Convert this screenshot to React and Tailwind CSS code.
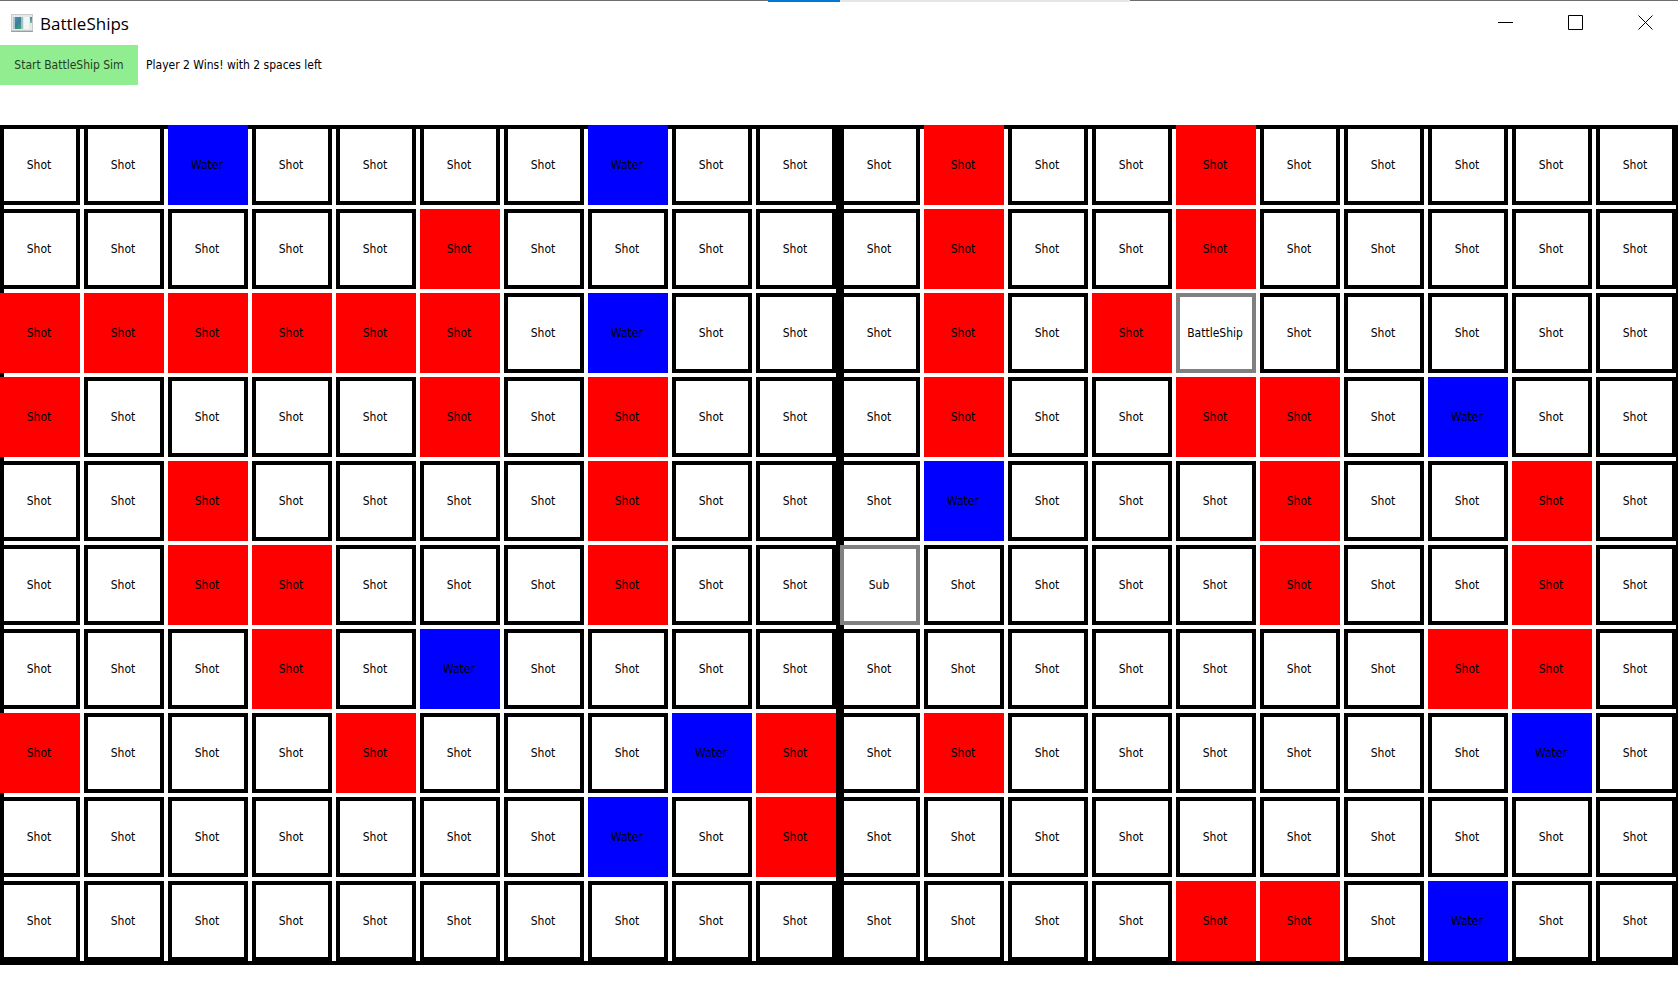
const LEFT = [
  "..W....W..",
  ".....R....",
  "RRRRRR.W..",
  "R....R.R..",
  "..R....R..",
  "..RR...R..",
  "...R.W....",
  "R...R...WR",
  ".......W.R",
  "..........",
];

const RIGHT = [
  ".R..R.....",
  ".R..R.....",
  ".R.RB.....",
  ".R..RR.W..",
  ".W...R..R.",
  "S....R..R.",
  ".......RR.",
  ".R......W.",
  "..........",
  "....RR.W..",
];

const CELLS = {
  ".": { label: "Shot", look: "border-4 border-black bg-white" },
  R: { label: "Shot", look: "bg-[#ff0000]" },
  W: { label: "Water", look: "bg-[#0000ff]" },
  S: { label: "Sub", look: "border-4 border-[#808080] bg-white" },
  B: { label: "BattleShip", look: "border-4 border-[#808080] bg-white" },
};

function Board({ name, rows }) {
  return (
    <section
      aria-label={name}
      className="grid shrink-0 grid-cols-[repeat(10,80px)] gap-1 pr-1 pb-1 shadow-[inset_0_0_0_4px_#000]"
    >
      {rows.flatMap((row, y) =>
        [...row].map((code, x) => (
          <div
            key={`${x}-${y}`}
            className={`flex h-20 w-20 items-center justify-center pr-0.5 ${CELLS[code].look}`}
          >
            {CELLS[code].label}
          </div>
        ))
      )}
    </section>
  );
}

function AppIcon() {
  return (
    <svg width="24" height="20" viewBox="0 0 24 20" aria-hidden="true">
      <defs>
        <linearGradient id="pane" x1="0" y1="0" x2="1" y2="1">
          <stop offset="0" stopColor="#5b8fc0" />
          <stop offset="0.5" stopColor="#3a7f9a" />
          <stop offset="1" stopColor="#4fae62" />
        </linearGradient>
        <linearGradient id="side" x1="0" y1="0" x2="0" y2="1">
          <stop offset="0" stopColor="#3f7fb5" />
          <stop offset="1" stopColor="#7cc08a" />
        </linearGradient>
      </defs>
      <rect x="1" y="0" width="22" height="18" fill="#c9cccd" />
      <rect x="2" y="1" width="20" height="15" fill="#e6e9ea" />
      <rect x="3" y="3" width="10" height="12" fill="url(#pane)" />
      <rect x="3" y="3" width="2" height="12" fill="#a9c6d3" />
      <rect x="11" y="3" width="2" height="12" fill="#9dc0cb" />
      <rect x="14" y="3" width="5" height="12" fill="#f4f5f5" />
      <rect x="20" y="3" width="2" height="6" fill="url(#side)" />
      <rect x="1" y="17" width="22" height="1" fill="#9b9fa0" />
    </svg>
  );
}

function WindowButton({ label, children }) {
  return (
    <button aria-label={label} className="flex w-[70px] items-center justify-center">
      <svg
        width="15"
        height="15"
        viewBox="0 0 15 15"
        fill="none"
        stroke="#000"
        aria-hidden="true"
      >
        {children}
      </svg>
    </button>
  );
}

export default function App() {
  return (
    <div className="min-h-screen overflow-hidden bg-white font-['DejaVu_Sans_Condensed','DejaVu_Sans',sans-serif] text-[12px] leading-4 text-black">
      <div className="flex h-0.5 items-start">
        <div className="h-px w-[768px] bg-[#6e6e6e]" />
        <div className="h-0.5 w-[72px] bg-[#0078d7]" />
        <div className="h-0.5 w-[290px] bg-[#e6e6e6]" />
        <div className="h-px flex-1 bg-[#6e6e6e]" />
      </div>

      <header className="-mr-0.5 flex h-[43px] items-start justify-between">
        <div className="flex h-full items-center gap-1.5 pl-2.5">
          <AppIcon />
          <h1 className="font-['Open_Sans','Noto_Sans',sans-serif] text-[17px] leading-6">
            BattleShips
          </h1>
        </div>
        <div className="flex h-[41px]">
          <WindowButton label="Minimize">
            <path d="M0 7.5H15" />
          </WindowButton>
          <WindowButton label="Maximize">
            <path d="M0.5 0.5H14.5V14.5H0.5Z" />
          </WindowButton>
          <WindowButton label="Close">
            <path d="M0.5 0.5L14.5 14.5M14.5 0.5L0.5 14.5" />
          </WindowButton>
        </div>
      </header>

      <div className="flex items-center gap-2">
        <button className="h-10 w-[138px] bg-[#90ee90] whitespace-nowrap text-[#26401f]">
          Start BattleShip Sim
        </button>
        <p>Player 2 Wins! with 2 spaces left</p>
      </div>

      <main className="mt-10 flex">
        <Board name="Player 1" rows={LEFT} />
        <Board name="Player 2" rows={RIGHT} />
      </main>
    </div>
  );
}
